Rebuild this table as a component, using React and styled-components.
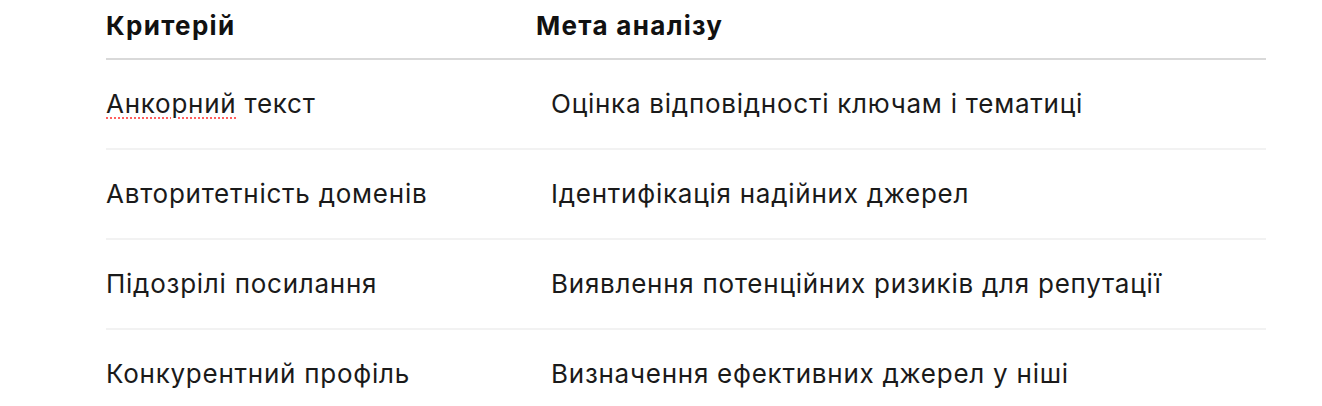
import React from "react";
import styled, { createGlobalStyle } from "styled-components";

const Global = createGlobalStyle`
  html, body { margin: 0; padding: 0; background: #ffffff; }
  body { font-family: Inter, "Noto Sans", sans-serif; color: #1a1a1a; }
`;

const Page = styled.div`
  padding: 0 56px 0 106px;
`;

const Table = styled.div`
  width: 1160px;
  display: grid;
  grid-template-columns: 430px 1fr;
`;

const HeadCell = styled.div`
  height: 60px;
  box-sizing: border-box;
  padding-top: 9px;
  border-bottom: 2px solid #d9d9d9;
  font-size: 26px;
  font-weight: 700;
  color: #111111;
  line-height: 34px;
  letter-spacing: 1.3px;
`;

const Cell = styled.div`
  height: 90px;
  box-sizing: border-box;
  display: flex;
  align-items: center;
  padding-left: ${(p) => (p.$second ? "15px" : "0")};
  border-bottom: ${(p) => (p.$last ? "none" : "2px solid #f2f2f2")};
  padding-bottom: ${(p) => (p.$last ? "2px" : "0")};
  font-size: 26px;
  font-weight: 400;
  line-height: 34px;
  letter-spacing: 0.75px;
  color: #1a1a1a;
`;

const CellText = styled.span`
  white-space: pre;
`;

const Misspelled = styled.span`
  text-decoration-line: underline;
  text-decoration-style: dotted;
  text-decoration-color: #ff5f5f;
  text-decoration-thickness: 2px;
  text-underline-offset: 4px;
`;

const rows = [
  [<><Misspelled>Анкорний</Misspelled> текст</>, "Оцінка відповідності ключам і тематиці"],
  ["Авторитетність доменів", "Ідентифікація надійних джерел"],
  ["Підозрілі посилання", "Виявлення потенційних ризиків для репутації"],
  ["Конкурентний профіль", "Визначення ефективних джерел у ніші"],
];

export default function App() {
  return (
    <>
      <Global />
      <Page>
        <Table>
          <HeadCell>Критерій</HeadCell>
          <HeadCell>Мета аналізу</HeadCell>
          {rows.map(([a, b], i) => (
            <React.Fragment key={i}>
              <Cell $last={i === rows.length - 1}><CellText>{a}</CellText></Cell>
              <Cell $second $last={i === rows.length - 1}><CellText>{b}</CellText></Cell>
            </React.Fragment>
          ))}
        </Table>
      </Page>
    </>
  );
}
